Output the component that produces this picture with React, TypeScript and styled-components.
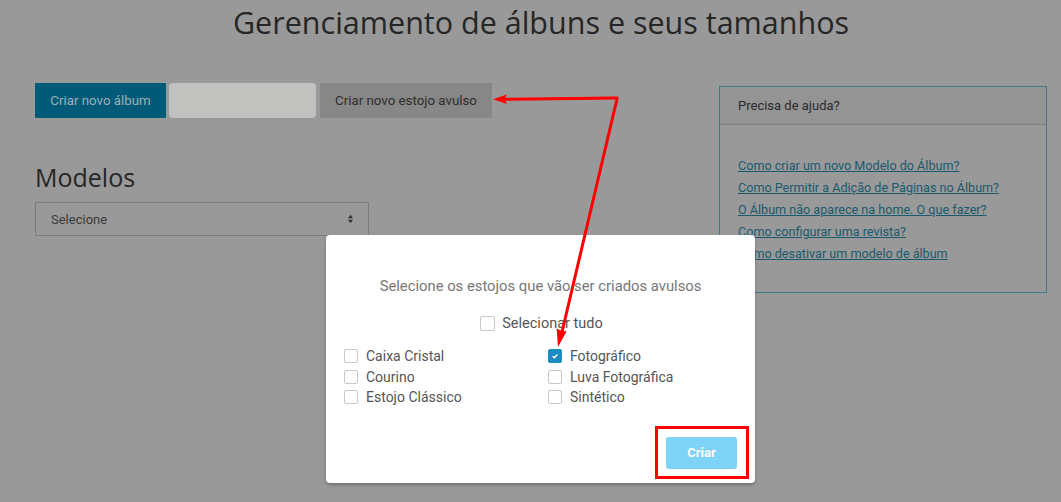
import styled, { createGlobalStyle } from "styled-components";

const links = [
  "Como criar um novo Modelo do Álbum?",
  "Como Permitir a Adição de Páginas no Álbum?",
  "O Álbum não aparece na home. O que fazer?",
  "Como configurar uma revista?",
  "Como desativar um modelo de álbum",
];

const leftOptions = [
  { label: "Caixa Cristal", checked: false },
  { label: "Courino", checked: false },
  { label: "Estojo Clássico", checked: false },
];

const rightOptions = [
  { label: "Fotográfico", checked: true },
  { label: "Luva Fotográfica", checked: false },
  { label: "Sintético", checked: false },
];

export default function App() {
  return (
    <>
      <GlobalStyle />
      <Page>
        <Title>Gerenciamento de álbuns e seus tamanhos</Title>
        <Columns>
          <Main>
            <Toolbar>
              <Button variant="primary">Criar novo álbum</Button>
              <Redacted />
              <Button variant="secondary">Criar novo estojo avulso</Button>
            </Toolbar>
            <SectionTitle>Modelos</SectionTitle>
            <Select>
              <span>Selecione</span>
              <SelectArrow viewBox="0 0 8 12">
                <path d="M4 1 L7 5 H1 Z M4 11 L7 7 H1 Z" fill="#333" />
              </SelectArrow>
            </Select>
          </Main>
          <HelpPanel>
            <HelpHeader>Precisa de ajuda?</HelpHeader>
            <HelpBody>
              {links.map((l) => (
                <HelpLink key={l} href="#">
                  {l}
                </HelpLink>
              ))}
            </HelpBody>
          </HelpPanel>
        </Columns>

        <Modal>
          <ModalText>Selecione os estojos que vão ser criados avulsos</ModalText>
          <SelectAll>
            <Check checked={false} size={15} />
            <span>Selecionar tudo</span>
          </SelectAll>
          <OptionGrid>
            <OptionCol>
              {leftOptions.map((o) => (
                <Option key={o.label}>
                  <Check checked={o.checked} />
                  <span>{o.label}</span>
                </Option>
              ))}
            </OptionCol>
            <OptionCol>
              {rightOptions.map((o) => (
                <Option key={o.label}>
                  <Check checked={o.checked} />
                  <span>{o.label}</span>
                </Option>
              ))}
            </OptionCol>
          </OptionGrid>
          <ModalFooter>
            <CreateButton>Criar</CreateButton>
          </ModalFooter>
        </Modal>

        <Annotations viewBox="0 0 1061 502" width="1061" height="502">
          <g stroke="#ff0000" strokeWidth="3" fill="none" strokeLinecap="round">
            <path d="M617 98 L505 99.3" />
            <path d="M617 99 L562 332" />
          </g>
          <g fill="#ff0000">
            <path d="M493 99.3 L507 94.5 L504.5 99.3 L507 104 Z" />
            <path d="M558 347 L556.6 328.6 L562 331 L566.6 331.2 Z" />
          </g>
          <rect x="656.5" y="427.5" width="91" height="50" fill="none" stroke="#ff0000" strokeWidth="3" />
        </Annotations>
      </Page>
    </>
  );
}

function Check({ checked, size = 14 }: { checked: boolean; size?: number }) {
  return (
    <Box checked={checked} style={{ width: size, height: size }}>
      {checked && (
        <svg viewBox="0 0 10 10" width="8" height="8">
          <path d="M2 5.2 L4.2 7.2 L8 3" stroke="#fff" strokeWidth="1.8" fill="none" />
        </svg>
      )}
    </Box>
  );
}

const GlobalStyle = createGlobalStyle`
  body {
    margin: 0;
    background: #999999;
    font-family: Roboto, "Liberation Sans", sans-serif;
  }
`;

const Page = styled.div`
  position: relative;
  width: 1061px;
  height: 502px;
  overflow: hidden;
  padding: 0 14px 0 35px;
  box-sizing: border-box;
`;

const Title = styled.h1`
  margin: 0;
  padding-top: 2px;
  text-align: center;
  font-family: "Open Sans", sans-serif;
  font-weight: 400;
  font-size: 30.5px;
  line-height: 40px;
  color: #262626;
`;

const Columns = styled.div`
  display: flex;
  justify-content: space-between;
  margin-top: 41px;
`;

const Main = styled.div`
  display: flex;
  flex-direction: column;
`;

const Toolbar = styled.div`
  display: flex;
  gap: 3px;
  height: 35px;
`;

const Button = styled.button<{ variant: "primary" | "secondary" }>`
  border: none;
  border-radius: 1px;
  padding: 0;
  white-space: nowrap;
  font-family: Roboto, sans-serif;
  font-size: 13.3px;
  background: ${(p) => (p.variant === "primary" ? "#005a78" : "#878787")};
  color: ${(p) => (p.variant === "primary" ? "#9fb0b8" : "#2e2e2e")};
  width: ${(p) => (p.variant === "primary" ? "131px" : "172px")};
  margin-left: ${(p) => (p.variant === "secondary" ? "1px" : "0")};
`;

const Redacted = styled.div`
  width: 147px;
  border-radius: 4px;
  background: #c1c1c0;
`;

const SectionTitle = styled.h2`
  margin: 42px 0 0;
  font-family: "Open Sans", sans-serif;
  font-weight: 400;
  font-size: 25px;
  line-height: 34px;
  color: #262626;
`;

const Select = styled.div`
  margin-top: 8px;
  width: 334px;
  height: 34px;
  box-sizing: border-box;
  border: 1px solid #7c7c7c;
  border-radius: 1px;
  display: flex;
  align-items: center;
  justify-content: space-between;
  padding: 0 14px 0 15px;
  font-size: 13px;
  color: #3a3a3a;
`;

const SelectArrow = styled.svg`
  width: 7px;
  height: 10px;
`;

const HelpPanel = styled.div`
  width: 328px;
  height: 207px;
  margin-top: 3px;
  box-sizing: border-box;
  border: 1px solid #3d7d8b;
`;

const HelpHeader = styled.div`
  height: 37px;
  display: flex;
  align-items: center;
  padding-left: 18px;
  background: #949494;
  border-bottom: 1px solid #7f7f7f;
  font-size: 13px;
  color: #2b2b2b;
`;

const HelpBody = styled.div`
  display: flex;
  flex-direction: column;
  gap: 6px;
  padding: 33px 18px 0;
`;

const HelpLink = styled.a`
  font-size: 12.6px;
  line-height: 16px;
  color: #1b5a6e;
  text-decoration: underline;
`;

const Modal = styled.div`
  position: absolute;
  left: 326px;
  top: 235px;
  width: 429px;
  height: 248px;
  box-sizing: border-box;
  background: #ffffff;
  border-radius: 4px;
  box-shadow: 0 2px 3px rgba(0, 0, 0, 0.25);
  padding: 41px 18px 0;
  display: flex;
  flex-direction: column;
`;

const ModalText = styled.div`
  text-align: center;
  font-size: 14.8px;
  line-height: 20px;
  color: #777777;
`;

const SelectAll = styled.label`
  display: flex;
  align-items: center;
  justify-content: center;
  gap: 7px;
  margin-top: 19px;
  font-size: 14.5px;
  color: #555555;
  padding-left: 2px;
`;

const OptionGrid = styled.div`
  display: grid;
  grid-template-columns: 204px 1fr;
  margin-top: 14px;
`;

const OptionCol = styled.div`
  display: flex;
  flex-direction: column;
`;

const Option = styled.label`
  display: flex;
  align-items: center;
  gap: 8px;
  height: 20.5px;
  font-size: 14px;
  color: #555555;
`;

const Box = styled.span<{ checked: boolean }>`
  box-sizing: border-box;
  display: inline-flex;
  align-items: center;
  justify-content: center;
  border-radius: 2px;
  border: 1px solid ${(p) => (p.checked ? "#1a8cc1" : "#c8c8c8")};
  background: ${(p) => (p.checked ? "#1a8cc1" : "#ffffff")};
`;

const ModalFooter = styled.div`
  display: flex;
  justify-content: flex-end;
  margin-top: 29px;
`;

const CreateButton = styled.button`
  width: 71px;
  height: 32px;
  border: none;
  border-radius: 3px;
  background: #7fd3f7;
  color: #ffffff;
  font-family: Roboto, sans-serif;
  font-weight: 700;
  font-size: 13px;
`;

const Annotations = styled.svg`
  position: absolute;
  left: 0;
  top: 0;
  pointer-events: none;
`;
